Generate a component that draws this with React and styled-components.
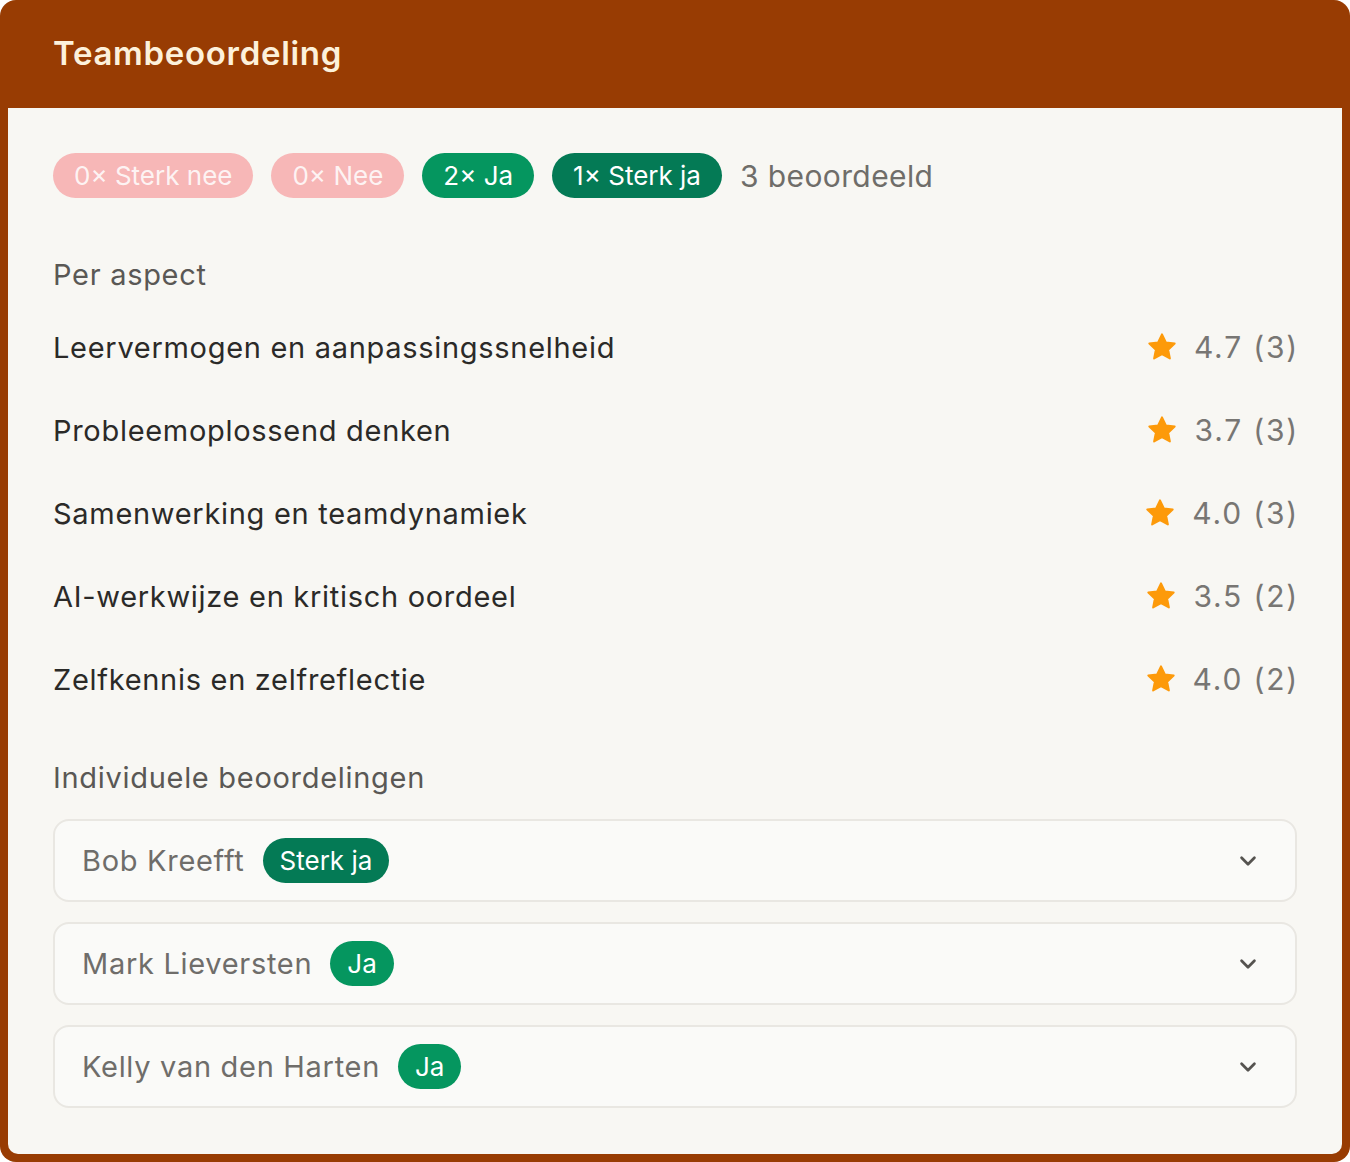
import React from 'react'
import styled, { createGlobalStyle } from 'styled-components'

const Global = createGlobalStyle`
  html, body {
    margin: 0;
    padding: 0;
    background: #ffffff;
  }
  body {
    font-family: Inter, "Noto Sans", sans-serif;
    letter-spacing: 0.7px;
  }
`

const Card = styled.div`
  width: 1350px;
  height: 1162px;
  box-sizing: border-box;
  background: #983c03;
  border-radius: 16px;
  padding: 0 8px 8px;
  display: flex;
  flex-direction: column;
`

const Header = styled.div`
  height: 108px;
  display: flex;
  align-items: center;
  padding-left: 45px;
  padding-bottom: 2px;
  box-sizing: border-box;
`

const Title = styled.h1`
  margin: 0;
  color: #fdf1db;
  font-size: 33px;
  font-weight: 600;
  letter-spacing: 0.7px;
`

const Body = styled.div`
  flex: 1;
  background: #f8f7f3;
  border-radius: 0 0 10px 10px;
  padding: 45px 45px 46px;
  display: flex;
  flex-direction: column;
`

const Summary = styled.div`
  display: flex;
  align-items: center;
  gap: 18px;
`

const Pill = styled.span`
  height: 45px;
  display: inline-flex;
  align-items: center;
  padding: 0 ${p => p.$pad || 21}px;
  border-radius: 999px;
  font-size: 26px;
  letter-spacing: 0;
  background: ${p => p.$bg};
  color: ${p => p.$fg || '#ffffff'};
`

const Count = styled.span`
  font-size: 30px;
  color: #6f6d69;
  letter-spacing: 0.4px;
`

const SectionLabel = styled.div`
  font-size: 29px;
  line-height: 40px;
  color: #5a5855;
  margin-top: ${p => p.$top}px;
`

const AspectList = styled.div`
  display: flex;
  flex-direction: column;
  gap: 43px;
  margin-top: 32px;
`

const AspectRow = styled.div`
  display: flex;
  align-items: center;
  justify-content: space-between;
  height: 40px;
`

const AspectName = styled.span`
  font-size: 29px;
  color: #2b2a28;
`

const Rating = styled.span`
  display: flex;
  align-items: center;
  gap: 16px;
  font-size: 30px;
  color: #787673;
  letter-spacing: 1.8px;
  margin-right: -2px;
`

const Star = styled.svg`
  width: 32px;
  height: 32px;
  fill: #fd9a0a;
`

const Reviews = styled.div`
  display: flex;
  flex-direction: column;
  gap: 20px;
  margin-top: 21px;
`

const Review = styled.div`
  height: 83px;
  box-sizing: border-box;
  border: 2px solid #e9e7e2;
  border-radius: 16px;
  background: #fafaf8;
  display: flex;
  align-items: center;
  padding: 0 36px 0 27px;
`

const ReviewName = styled.span`
  font-size: 29px;
  color: #6f6d6a;
  margin-right: 18px;
`

const Chevron = styled.svg`
  margin-left: auto;
  width: 22px;
  height: 22px;
  stroke: #555350;
  stroke-width: 3;
  fill: none;
`

const aspects = [
  ['Leervermogen en aanpassingssnelheid', '4.7', 3],
  ['Probleemoplossend denken', '3.7', 3],
  ['Samenwerking en teamdynamiek', '4.0', 3],
  ['AI-werkwijze en kritisch oordeel', '3.5', 2],
  ['Zelfkennis en zelfreflectie', '4.0', 2],
]

const reviews = [
  ['Bob Kreefft', 'Sterk ja', '#047a55'],
  ['Mark Lieversten', 'Ja', '#05965f'],
  ['Kelly van den Harten', 'Ja', '#05965f'],
]

export default function App() {
  return (
    <>
      <Global />
      <Card>
        <Header>
          <Title>Teambeoordeling</Title>
        </Header>
        <Body>
          <Summary>
            <Pill $bg="#f7b7b7" $fg="rgba(255,255,255,0.85)">0× Sterk nee</Pill>
            <Pill $bg="#f7b7b7" $fg="rgba(255,255,255,0.85)">0× Nee</Pill>
            <Pill $bg="#05965f">2× Ja</Pill>
            <Pill $bg="#047a55">1× Sterk ja</Pill>
            <Count>3 beoordeeld</Count>
          </Summary>

          <SectionLabel $top={57}>Per aspect</SectionLabel>
          <AspectList>
            {aspects.map(([name, score, n]) => (
              <AspectRow key={name}>
                <AspectName>{name}</AspectName>
                <Rating>
                  <Star viewBox="0 0 24 24">
                    <path d="M12 2.5l2.9 6.1 6.6.8-4.9 4.6 1.3 6.6L12 17.3l-5.9 3.3 1.3-6.6-4.9-4.6 6.6-.8z" strokeLinejoin="round" stroke="#fd9a0a" strokeWidth="1.5" />
                  </Star>
                  {score} ({n})
                </Rating>
              </AspectRow>
            ))}
          </AspectList>

          <SectionLabel $top={59}>Individuele beoordelingen</SectionLabel>
          <Reviews>
            {reviews.map(([name, verdict, bg]) => (
              <Review key={name}>
                <ReviewName>{name}</ReviewName>
                <Pill $bg={bg} $pad={17}>{verdict}</Pill>
                <Chevron viewBox="0 0 24 24" strokeLinecap="round" strokeLinejoin="round">
                  <path d="M5 8.5l7 7 7-7" />
                </Chevron>
              </Review>
            ))}
          </Reviews>
        </Body>
      </Card>
    </>
  )
}
